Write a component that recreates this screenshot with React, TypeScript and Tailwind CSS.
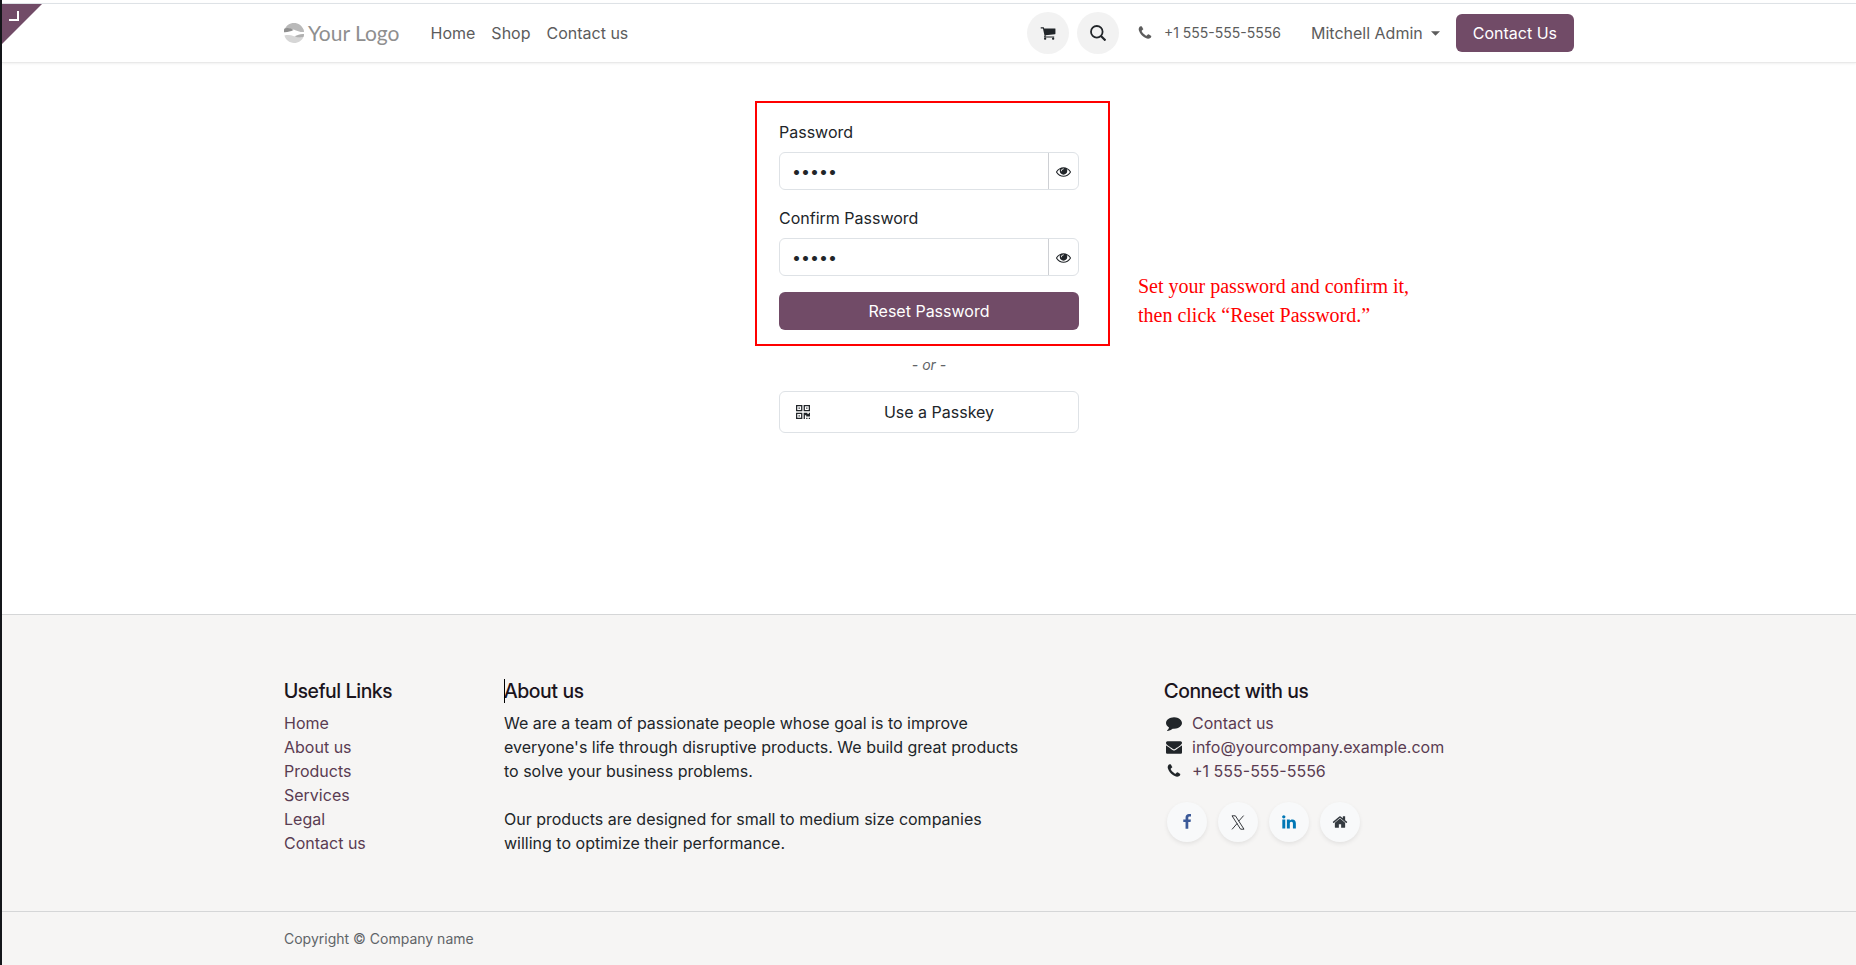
import { useState } from 'react';

const icons = {
  cart: 'M704 1536q0 52-38 90t-90 38-90-38-38-90 38-90 90-38 90 38 38 90zm896 0q0 52-38 90t-90 38-90-38-38-90 38-90 90-38 90 38 38 90zm128-1088v512q0 24-16.5 42.5t-40.5 21.5l-1044 122q13 60 13 70 0 16-24 64h920q26 0 45 19t19 45-19 45-45 19h-1024q-26 0-45-19t-19-45q0-11 8-31.5t16-36 21.5-40 15.5-29.5l-177-823h-204q-26 0-45-19t-19-45 19-45 45-19h256q16 0 28.5 6.5t19.5 15.5 13 24.5 8 26 5.5 29.5 4.5 26h1201q26 0 45 19t19 45z',
  eye: 'M1664 960q-152-236-381-353 61 104 61 225 0 185-131.5 316.5t-316.5 131.5-316.5-131.5-131.5-316.5q0-121 61-225-229 117-381 353 133 205 333.5 326.5t434.5 121.5 434.5-121.5 333.5-326.5zm-720-384q0-20-14-34t-34-14q-125 0-214.5 89.5t-89.5 214.5q0 20 14 34t34 14 34-14 14-34q0-86 61-147t147-61q20 0 34-14t14-34zm848 384q0 34-20 69-140 230-376.5 368.5t-499.5 138.5-499.5-139-376.5-368q-20-35-20-69t20-69q140-229 376.5-368t499.5-139 499.5 139 376.5 368q20 35 20 69z',
  phone: 'M1600 1240q0 27-10 70.5t-21 68.5q-21 50-122 106-94 51-186 51-27 0-53-3.5t-57.5-12.5-47-14.5-55.5-20.5-49-18q-98-35-175-83-127-79-264-216t-216-264q-48-77-83-175-3-9-18-49t-20.5-55.5-14.5-47-12.5-57.5-3.5-53q0-92 51-186 56-101 106-122 25-11 68.5-21t70.5-10q14 0 21 3 18 6 53 76 11 19 30 54t35 63.5 31 53.5q3 4 17.5 25t21.5 35.5 7 28.5q0 20-28.5 50t-62 55-62 53-28.5 46q0 9 5 22.5t8.5 20.5 14 24 11.5 19q76 137 174 235t235 174q2 1 19 11.5t24 14 20.5 8.5 22.5 5q18 0 46-28.5t53-62 55-62 50-28.5q14 0 28.5 7t35.5 21.5 25 17.5q25 15 53.5 31t63.5 35 54 30q70 35 76 53 3 7 3 21z',
  envelope: 'M1792 710v794q0 66-47 113t-113 47h-1472q-66 0-113-47t-47-113v-794q44 49 101 87 362 246 497 345 57 42 92.5 65.5t94.5 48 110 24.5h2q51 0 110-24.5t94.5-48 92.5-65.5q170-123 498-345 57-39 100-87zm0-294q0 79-49 151t-122 123q-376 261-468 325-10 7-42.5 31t-54 38.5-52 32.5-57.5 27-50 9h-2q-23 0-50-9t-57.5-27-52-32.5-54-38.5-42.5-31q-91-64-262-182.5t-205-142.5q-62-42-117-115.5t-55-136.5q0-78 41.5-130t118.5-52h1472q65 0 112.5 47t47.5 113z',
  comment: 'M1792 896q0 174-120 321.5t-326 233-450 85.5q-70 0-145-8-198 175-460 242-49 14-114 22-17 2-30.5-9t-17.5-29v-1q-3-4-.5-12t2-10 4.5-9.5l6-9 7-8.5 8-9q7-8 31-34.5t34.5-38 31-39.5 32.5-51 27-59 26-76q-157-89-247.5-220t-90.5-281q0-130 71-248.5t191-204.5 286-136.5 348-50.5q244 0 450 85.5t326 233 120 321.5z',
  home: 'M1472 992v480q0 26-19 45t-45 19h-384v-384h-256v384h-384q-26 0-45-19t-19-45v-480q0-1 .5-3t.5-3l575-474 575 474q1 2 1 6zm223-69l-62 74q-8 9-21 11h-3q-13 0-21-7l-692-577-692 577q-12 8-24 7-13-2-21-11l-62-74q-8-10-7-23.5t11-21.5l719-599q32-26 76-26t76 26l244 204v-195q0-14 9-23t23-9h192q14 0 23 9t9 23v408l219 182q10 8 11 21.5t-7 23.5z',
  facebook: 'M1343 12v264h-157q-86 0-116 36t-30 108v189h293l-39 296h-254v759h-306v-759h-255v-296h255v-218q0-186 104-288.5t277-102.5q147 0 228 12z',
  linkedin: 'M477 625v991h-330v-991h330zm21-306q1 73-50.5 122t-135.5 49h-2q-82 0-132-49t-50-122q0-74 51.5-122.5t134.5-48.5 133 48.5 51 122.5zm1166 729v568h-329v-530q0-105-40.5-164.5t-126.5-59.5q-63 0-105.5 34.5t-63.5 85.5q-11 30-11 81v553h-329q2-399 2-647t-1-296l-1-48h329v144h-2q20-32 41-56t56.5-52 87-43.5 114.5-15.5q171 0 275 113.5t104 332.5z',
};

function Icon({ name, className }: { name: keyof typeof icons; className: string }) {
  return (
    <svg viewBox="0 0 1792 1792" fill="currentColor" aria-hidden="true" className={className}>
      <path d={icons[name]} />
    </svg>
  );
}

function QrIcon() {
  return (
    <svg viewBox="0 0 11 11" fill="currentColor" fillRule="evenodd" aria-hidden="true" className="w-[14px] h-[14px] mr-[6px]">
      <path d="M0 0h5v5H0zM1 1v3h3V1zM2 2h1v1H2zM6 0h5v5H6zM7 1v3h3V1zM8 2h1v1H8zM0 6h5v5H0zM1 7v3h3V7zM2 8h1v1H2z" />
      <path d="M6 6h3v1h1V6h1v3H8V8H7v3H6zM8 10h1v1H8zM10 10h1v1h-1z" />
    </svg>
  );
}

function XIcon() {
  return (
    <svg viewBox="0 0 14 15" fill="none" stroke="#212529" strokeWidth="0.900" aria-hidden="true" className="w-[14px] h-[15px]">
      <path d="M1 .8h3.400l8.600 13.400H9.600z" />
      <path d="M12.600.6L7.700 6.200M6.200 8.400L1 14.400" />
    </svg>
  );
}

function Logo() {
  return (
    <a href="#" className="flex items-center gap-1 text-[#8f8f8f]">
      <svg viewBox="0 0 20 20" className="w-5 h-5" aria-hidden="true">
        <path d="M0.6 6.6C2 2.6 5.6 0 10 0s8 2.6 9.600 6.600c.3 1 .4 1.600.4 2.400-3 .4-5.500-.4-8-1.400C8.500 6 4.500 5 .6 6.600z" fill="#b9b9b9" />
        <path d="M.2 5.800C3.500 4.300 7 5.400 9.500 7 6.500 8.400 3.500 9.400 0 9.200 0 8 0 6.800.2 5.800z" fill="#8f8f8f" />
        <path d="M.4 12.600C4 11.600 7 12.200 10 13.300c3.500 1.300 6.500 1.400 9.600.2C18.200 17.400 14.600 20 10 20S1.600 17 .4 12.600z" fill="#d6d6d6" />
        <path d="M20 11c-3.500-.3-6.500.8-9.500 2.300 3 1.500 6.200 1.700 9.200.5.200-.9.300-1.800.3-2.800z" fill="#b0b0b0" />
      </svg>
      <span className="font-[Lato,sans-serif] text-[21px] leading-6">Your Logo</span>
    </a>
  );
}

function Header() {
  return (
    <header className="relative mt-[3px] h-[60px] border-y border-t-[#dee2e6] border-b-[#e9e9e9] shadow-[0_1px_2px_rgba(0,0,0,0.06)]">
      <button aria-label="Open editor" className="absolute left-0 top-0">
        <svg viewBox="0 0 40 40" className="w-10 h-10">
          <path d="M0 0H40L0 40z" fill="#714b67" />
          <path d="M7 16h9V7" fill="none" stroke="#fff" strokeWidth="2" />
        </svg>
      </button>
      <div className="h-full max-w-[1290px] mx-auto flex items-center text-[#5c5c5c]">
        <Logo />
        <nav className="flex gap-4 ml-[31px]">
          <a href="#">Home</a>
          <a href="#">Shop</a>
          <a href="#">Contact us</a>
        </nav>
        <div className="ml-auto flex items-center">
          <button aria-label="Cart" className="w-[42px] h-[42px] rounded-full bg-[#f2f2f2] text-[#212529] flex items-center justify-center">
            <Icon name="cart" className="w-4 h-4" />
          </button>
          <button aria-label="Search" className="ml-2 w-[42px] h-[42px] rounded-full bg-[#f2f2f2] text-[#212529] flex items-center justify-center">
            <svg viewBox="0 0 16 16" fill="none" stroke="currentColor" className="w-4 h-4" aria-hidden="true">
              <circle cx="6.800" cy="6.800" r="5.800" strokeWidth="1.800" />
              <path d="M11 11l4.500 4.500" strokeWidth="2.200" />
            </svg>
          </button>
          <a href="#" className="ml-[18px] flex items-center gap-[11px] text-sm">
            <Icon name="phone" className="w-4 h-4" />
            +1 555-555-5556
          </a>
          <button className="ml-[30px] flex items-center gap-2">
            Mitchell Admin
            <svg viewBox="0 0 10 5" className="w-[9px] h-[5px]" fill="currentColor" aria-hidden="true">
              <path d="M0 0h10L5 5z" />
            </svg>
          </button>
          <a href="#" className="ml-4 px-[17px] h-[38px] leading-[38px] rounded-md bg-[#714b67] text-white">Contact Us</a>
        </div>
      </div>
    </header>
  );
}

function PasswordField({ id, label }: { id: string; label: string }) {
  const [visible, setVisible] = useState(false);

  return (
    <div className="mb-4">
      <label htmlFor={id} className="block mb-2">{label}</label>
      <div className="flex h-[38px] border border-[#dee2e6] rounded-md">
        <input
          id={id}
          type={visible ? 'text' : 'password'}
          defaultValue="admin"
          className="flex-1 min-w-0 px-3 bg-transparent outline-none"
        />
        <button
          type="button"
          aria-label="Show password"
          onClick={() => setVisible(!visible)}
          className="w-[30px] pt-px border-l border-[#ced0d4] flex items-center justify-center"
        >
          <Icon name="eye" className="w-[15px] h-[15px]" />
        </button>
      </div>
    </div>
  );
}

function ResetForm() {
  return (
    <main className="flex-1 pt-[57px]">
      <form className="w-[300px] mx-auto" onSubmit={(e) => e.preventDefault()}>
        <div className="relative">
          <PasswordField id="password" label="Password" />
          <PasswordField id="confirm" label="Confirm Password" />
          <button className="w-full h-[38px] rounded-md bg-[#714b67] text-white">Reset Password</button>
          {/* Annotation */}
          <div className="absolute -left-6 -right-[31px] -top-[19px] -bottom-4 border-2 border-[#ff0000] pointer-events-none" />
          <p className="absolute left-[359px] top-[152px] whitespace-nowrap font-['Liberation_Serif',serif] text-xl leading-[29px] text-[#ff0000]">
            Set your password and confirm it,<br />
            then click “Reset Password.”
          </p>
        </div>
        <div className="mt-6 mb-4 text-center text-sm leading-[21px] italic text-[#5f6468]">- or -</div>
        <button type="button" className="w-full h-[42px] px-4 border border-[#dee2e6] rounded-md flex items-center">
          <QrIcon />
          <span className="flex-1 text-center">Use a Passkey</span>
        </button>
      </form>
    </main>
  );
}

const usefulLinks = ['Home', 'About us', 'Products', 'Services', 'Legal', 'Contact us'];
const headingClass = "relative mb-2 font-['Inter_Display','Inter_Tight',Inter,sans-serif] text-xl leading-6 font-medium text-[#1a141c]";
const socialClass = 'w-10 h-10 rounded-full bg-[#f8f9fa] shadow-[0_2px_4px_rgba(0,0,0,0.08)] flex items-center justify-center';

function Footer() {
  return (
    <footer className="bg-[#f6f5f4] border-t border-[#d5d6d7]">
      <div className="max-w-[1290px] mx-auto pt-16 pb-14 grid grid-cols-12 gap-x-[30px]">
        <div className="col-span-2">
          <h5 className={headingClass}>Useful Links</h5>
          <ul className="text-[#5a3c52]">
            {usefulLinks.map((link) => (
              <li key={link}><a href="#">{link}</a></li>
            ))}
          </ul>
        </div>
        <div className="col-span-5">
          <h5 className={headingClass}>
            <span className="absolute left-0 top-0 w-px h-6 bg-black" />
            About us
          </h5>
          <p>
            We are a team of passionate people whose goal is to improve everyone's life through disruptive products. We build great products to solve your business problems.
          </p>
          <p className="mt-6">
            Our products are designed for small to medium size companies willing to optimize their performance.
          </p>
        </div>
        <div className="col-span-3 col-start-9">
          <h5 className={headingClass}>Connect with us</h5>
          <ul className="text-[#5a3c52]">
            <li className="flex items-center">
              <Icon name="comment" className="w-5 h-4 mr-2 text-[#212529]" />
              <a href="#">Contact us</a>
            </li>
            <li className="flex items-center">
              <Icon name="envelope" className="w-5 h-4 mr-2 text-[#212529]" />
              <a href="#">info@yourcompany.example.com</a>
            </li>
            <li className="flex items-center">
              <Icon name="phone" className="w-5 h-4 mr-2 text-[#212529]" />
              <a href="#">+1 555-555-5556</a>
            </li>
          </ul>
          <div className="mt-[19px] ml-[3px] flex gap-[11px]">
            <a href="#" aria-label="Facebook" className={socialClass}>
              <Icon name="facebook" className="w-4 h-4 text-[#3b5998]" />
            </a>
            <a href="#" aria-label="X" className={socialClass}>
              <XIcon />
            </a>
            <a href="#" aria-label="LinkedIn" className={socialClass}>
              <Icon name="linkedin" className="w-4 h-4 text-[#0077b5]" />
            </a>
            <a href="#" aria-label="Homepage" className={socialClass}>
              <Icon name="home" className="w-4 h-4 text-[#343a40]" />
            </a>
          </div>
        </div>
      </div>
      <div className="border-t border-[#d5d6d7]">
        <div className="max-w-[1290px] mx-auto py-4 text-sm leading-[21px] text-[#5f6468]">Copyright © Company name</div>
      </div>
    </footer>
  );
}

export default function App() {
  return (
    <div className="min-h-screen flex flex-col border-l-2 border-[#14161a] bg-white font-[Inter,sans-serif] text-base leading-6 text-[#212529]">
      <Header />
      <ResetForm />
      <Footer />
    </div>
  );
}
